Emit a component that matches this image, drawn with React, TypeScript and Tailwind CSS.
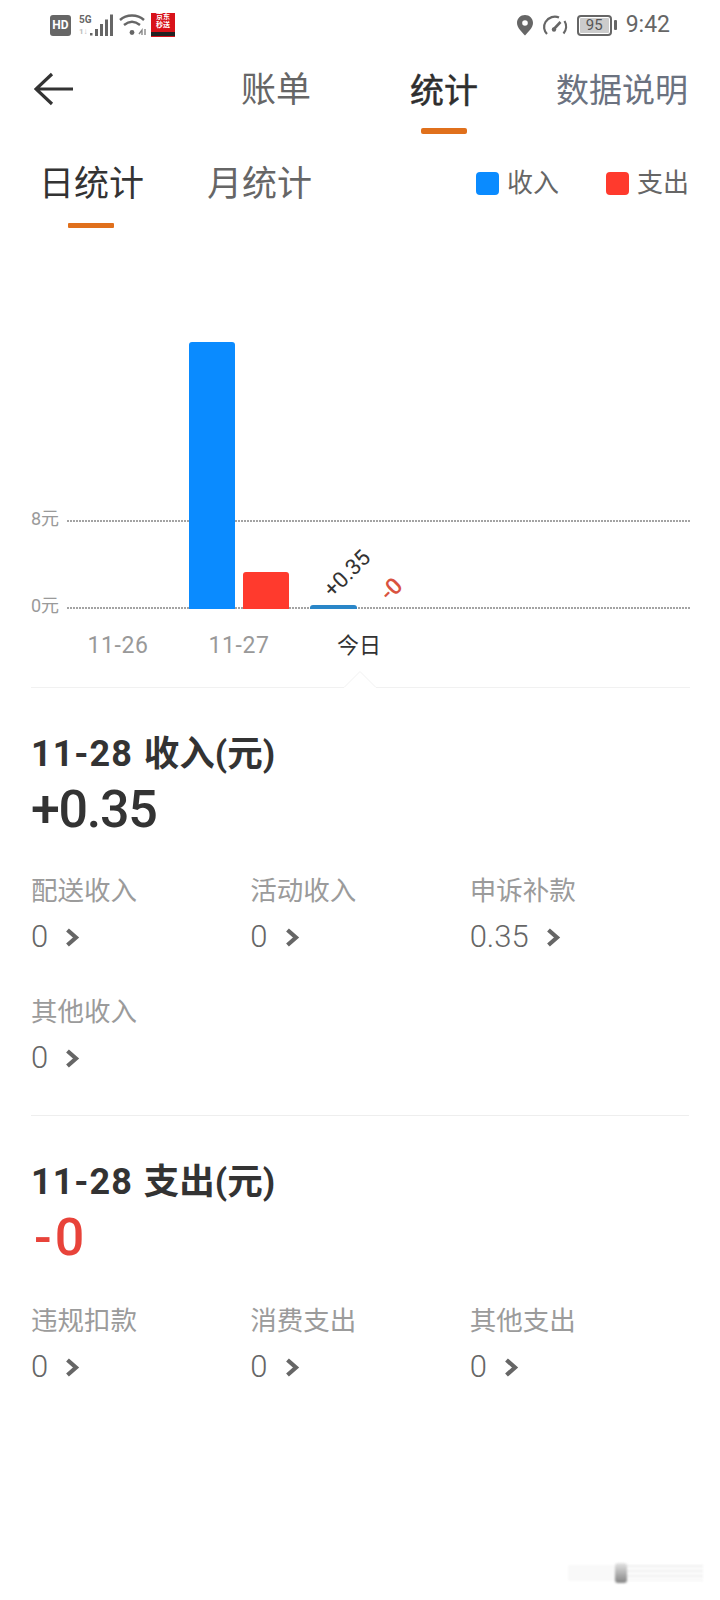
const cjk = "font-['Roboto','Noto_Sans_CJK_SC',sans-serif]";

function Chevron() {
  return (
    <svg width="15" height="21" viewBox="0 0 15 21" fill="none" className="ml-[17px]">
      <path d="M2.5 3L11 10.5L2.5 18" stroke="#666" strokeWidth="4.2" strokeLinejoin="miter" />
    </svg>
  );
}

function Item({ label, value }: { label: string; value: string }) {
  return (
    <div className="flex flex-col">
      <div className="text-[26.5px] leading-[36px] text-[#9b9b9b]">{label}</div>
      <div className="mt-[10px] flex h-[36px] items-center text-[31px] font-light text-[#666]">
        <span>{value}</span>
        <Chevron />
      </div>
    </div>
  );
}

function Title({ label }: { label: string }) {
  return (
    <div className="flex items-baseline font-bold leading-[38px] text-[#333]">
      <span className="text-[36px] tracking-[1px]">11-28</span>
      <span className="ml-[11px] text-[35.5px]">{label}</span>
    </div>
  );
}

function Chart() {
  const font = "Roboto, 'Noto Sans CJK SC', sans-serif";
  return (
    <svg width="720" height="448" viewBox="0 240 720 448" className="block" fontFamily={font}>
      <text x="31" y="525" fontSize="18" fill="#9a9a9a">8元</text>
      <text x="31" y="612" fontSize="18" fill="#9a9a9a">0元</text>
      <line x1="67" y1="521" x2="690" y2="521" stroke="#a3a3a3" strokeWidth="2" strokeDasharray="2 1" />
      <line x1="67" y1="608" x2="690" y2="608" stroke="#a3a3a3" strokeWidth="2" strokeDasharray="2 1" />
      <path d="M189 609V345a3 3 0 0 1 3-3h40a3 3 0 0 1 3 3V609Z" fill="#0a8bff" />
      <path d="M243 609V575a3 3 0 0 1 3-3h40a3 3 0 0 1 3 3V609Z" fill="#ff3a2d" />
      <path d="M310 609V608a3 3 0 0 1 3-3h41a3 3 0 0 1 3 3V609Z" fill="#2a86c8" />
      <text x="346.5" y="581" fontSize="22" fill="#333" textAnchor="middle" transform="rotate(-45 346.5 573)">+0.35</text>
      <text x="391" y="597" fontSize="23" fontWeight="500" fill="#d9533f" textAnchor="middle" transform="rotate(-45 391 589)">-0</text>
      <text x="118" y="653" fontSize="23" letterSpacing="0.6" fill="#999" textAnchor="middle">11-26</text>
      <text x="239" y="653" fontSize="23" letterSpacing="0.6" fill="#999" textAnchor="middle">11-27</text>
      <text x="359" y="653" fontSize="22" fill="#333" textAnchor="middle">今日</text>
      <path d="M31 687.5H344L360 671.5L376 687.5H690" fill="none" stroke="#f1f1f1" strokeWidth="1" />
    </svg>
  );
}

function StatusBar() {
  return (
    <div className="flex h-[50px] items-start justify-between pl-[50px] pr-[50px] pt-[13px]">
      <div className="flex items-center">
        <div className="flex h-[21px] w-[21px] items-center justify-center rounded-[3px] bg-[#666] text-[12px] font-bold leading-none text-white">HD</div>
        <svg width="38" height="24" viewBox="0 0 38 24" className="ml-[7px]">
          <text x="1" y="10" fontSize="10" fontWeight="700" fill="#666" fontFamily="Roboto, sans-serif">5G</text>
          <text x="1" y="21" fontSize="8" fontWeight="700" fill="#bbb" fontFamily="Roboto, sans-serif">1↓</text>
          <rect x="12" y="20" width="2.5" height="2.5" fill="#666" />
          <rect x="17" y="16" width="3" height="7" fill="#666" />
          <rect x="22" y="11" width="3" height="12" fill="#666" />
          <rect x="27" y="6.5" width="3" height="16.5" fill="#666" />
          <rect x="32" y="1.5" width="3" height="21.5" fill="#666" />
        </svg>
        <svg width="28" height="24" viewBox="0 0 28 24" className="ml-[3px]" fill="none">
          <path d="M1 7C7.5 1 18.5 1 25 7" stroke="#666" strokeWidth="2.4" />
          <path d="M5 12C10 8 16 8 21 12" stroke="#666" strokeWidth="2.4" />
          <circle cx="13" cy="19.5" r="2.4" fill="#666" />
          <path d="M20 21L23 17V22M26 16V22" stroke="#888" strokeWidth="1.4" />
        </svg>
        <div className="ml-[4px] flex h-[24px] w-[24px] flex-col items-center overflow-hidden bg-[#d8121a] text-[7px] font-bold leading-[8px] text-white">
          <span>京东</span>
          <span>秒送</span>
          <span className="mt-auto mb-[1px] h-[4px] w-full bg-[#222]" />
        </div>
      </div>
      <div className="flex items-center">
        <svg width="18" height="22" viewBox="0 0 18 22">
          <path fillRule="evenodd" d="M9 1C4.5 1 1 4.5 1 9C1 14 6 18 9 21.5C12 18 17 14 17 9C17 4.5 13.5 1 9 1ZM9 6.2A2.8 2.8 0 1 1 9 11.8A2.8 2.8 0 1 1 9 6.2Z" fill="#666" />
        </svg>
        <svg width="26" height="22" viewBox="0 0 26 22" className="ml-[8px]" fill="none">
          <path d="M5 20C2 17 1 12 3.5 8C6.5 3 12.5 1.5 17 3.5" stroke="#666" strokeWidth="2.2" />
          <path d="M22.5 7C25 11 24.5 16 21.5 19.5" stroke="#666" strokeWidth="2.2" />
          <path d="M11 16L18.5 8" stroke="#666" strokeWidth="2.6" />
          <circle cx="12" cy="15.5" r="2.2" fill="#666" />
        </svg>
        <div className="ml-[9px] flex h-[21px] w-[35px] items-center justify-center rounded-[4px] border-2 border-[#666] bg-[linear-gradient(#ccc,#ccc)] bg-clip-content p-[1px] text-[15px] leading-none text-[#555]">95</div>
        <div className="ml-[2px] h-[10px] w-[3px] rounded-[1px] bg-[#666]" />
        <div className="ml-[9px] text-[23px] leading-[24px] text-[#666]">9:42</div>
      </div>
    </div>
  );
}

export default function App() {
  return (
    <div className={`${cjk} relative flex h-[1600px] w-[720px] flex-col overflow-hidden bg-white`}>
      <StatusBar />
      {/* Header */}
      <div className="flex h-[85px] items-start pl-[34px] pr-[32px] pt-[18px]">
        <svg width="40" height="34" viewBox="0 0 40 34" fill="none" className="mt-[4px]">
          <path d="M18 2L2 17L18 32M2 17H39" stroke="#333" strokeWidth="3.2" />
        </svg>
        <div className="ml-[167px] text-[35px] leading-[46px] text-[#666]">账单</div>
        <div className="ml-[99px] flex flex-col items-center">
          <div className="text-[34px] leading-[46px] text-[#2e2e2e] [-webkit-text-stroke:0.5px_#2e2e2e]">统计</div>
          <div className="mt-[14px] h-[6px] w-[46px] rounded-[2px] bg-[#e0701c]" />
        </div>
        <div className="ml-auto text-[33px] leading-[46px] text-[#6b7280]">数据说明</div>
      </div>
      {/* Sub tabs and legend */}
      <div className="flex h-[105px] items-start pl-[40px] pr-[31px] pt-[27px]">
        <div className="flex flex-col items-center">
          <div className="-ml-[1px] text-[35px] leading-[46px] text-[#333]">日统计</div>
          <div className="mt-[15px] -ml-[2px] h-[5px] w-[46px] rounded-[1px] bg-[#e0701c]" />
        </div>
        <div className="ml-[63px] text-[35px] leading-[46px] text-[#666]">月统计</div>
        <div className="ml-auto mt-[3px] flex items-center">
          <div className="h-[23px] w-[23px] rounded-[4px] bg-[#0a8bff]" />
          <div className="ml-[8px] text-[26px] leading-[36px] text-[#666]">收入</div>
          <div className="ml-[47px] h-[23px] w-[23px] rounded-[4px] bg-[#ff3a2d]" />
          <div className="ml-[8px] text-[26px] leading-[36px] text-[#666]">支出</div>
        </div>
      </div>
      <Chart />
      {/* Income */}
      <div className="mx-[31px] border-b border-[#eeeeee] pb-[39px] pt-[47px]">
        <Title label="收入(元)" />
        <div className="mt-[7px] text-[52px] font-medium leading-[60px] tracking-[-1.3px] text-[#333]">+0.35</div>
        <div className="mt-[33px] grid grid-cols-3 gap-y-[39px]">
          <Item label="配送收入" value="0" />
          <Item label="活动收入" value="0" />
          <Item label="申诉补款" value="0.35" />
          <Item label="其他收入" value="0" />
        </div>
      </div>
      {/* Expense */}
      <div className="mx-[31px] pt-[47px]">
        <Title label="支出(元)" />
        <div className="mt-[7px] pl-[3px] text-[52px] font-medium leading-[60px] tracking-[3px] text-[#e8433a]">-0</div>
        <div className="mt-[35px] grid grid-cols-3">
          <Item label="违规扣款" value="0" />
          <Item label="消费支出" value="0" />
          <Item label="其他支出" value="0" />
        </div>
      </div>
      {/* Watermark */}
      <div className="mt-auto mb-[16px] ml-[568px] flex h-[22px] w-[135px] items-center opacity-80 blur-[1px]">
        <div className="h-[16px] w-[47px] bg-[#f8f8f8]" />
        <div className="h-[20px] w-[12px] rounded-[3px] bg-[linear-gradient(#ddd,#666)]" />
        <div className="h-[16px] w-[76px] bg-[repeating-linear-gradient(#ececec_0,#ececec_2px,#fcfcfc_2px,#fcfcfc_5px)]" />
      </div>
    </div>
  );
}
